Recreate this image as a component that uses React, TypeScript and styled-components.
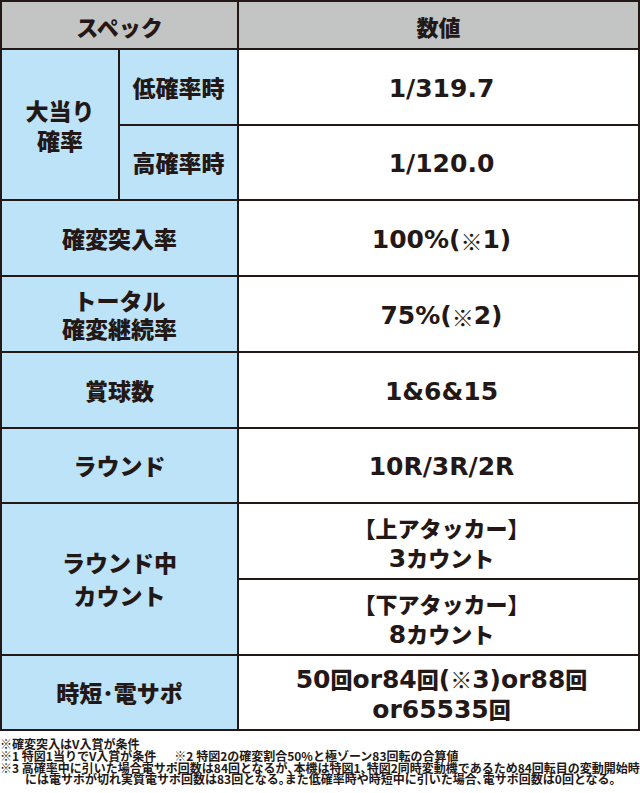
import React from "react"
import styled, { createGlobalStyle } from "styled-components"

const ink = "#231815"

const GlobalStyle = createGlobalStyle`
  html, body {
    margin: 0;
    padding: 0;
    background: #ffffff;
  }
  body {
    font-family: "Noto Sans CJK JP", sans-serif;
    color: ${ink};
  }
`

const Page = styled.div`
  width: 640px;
`

const Table = styled.div`
  display: grid;
  box-sizing: border-box;
  width: 640px;
  padding: 2px;
  gap: 2px;
  background: ${ink};
  grid-template-columns: 116px 117px 1fr;
  grid-template-rows: 46px 74px 73px 74px 74px 74px 73px 74px 74px 73px;
  grid-template-areas:
    "spec spec num"
    "hit low v1"
    "hit high v2"
    "entry entry v3"
    "cont cont v4"
    "prize prize v5"
    "round round v6"
    "count count v7"
    "count count v8"
    "time time v9";
`

const Cell = styled.div<{ $area: string }>`
  grid-area: ${(p) => p.$area};
  display: flex;
  align-items: center;
  justify-content: center;
  text-align: center;
`

const HeadCell = styled(Cell)`
  background: #c3c4c4;
  font-family: "Noto Sans CJK JP", sans-serif;
  font-weight: 900;
  font-size: 22px;
  line-height: 1;
  padding-top: 1px;
`

const LabelCell = styled(Cell)<{ $lh?: number }>`
  background: #bde3f8;
  font-family: "Noto Sans CJK JP", sans-serif;
  font-weight: 900;
  font-size: 23px;
  line-height: ${(p) => p.$lh ?? 29}px;
`

const ValueCell = styled(Cell)`
  background: #ffffff;
  box-sizing: border-box;
  padding: 3px 0 0 6px;
  font-family: "DejaVu Sans", "Noto Sans CJK JP", sans-serif;
  font-weight: 700;
  font-size: 25px;
  line-height: 28px;
`

const Ja = styled.span`
  font-family: "Noto Sans CJK JP", sans-serif;
  font-size: 22px;
  font-weight: 900;
`

const Brk = styled.span`
  font-feature-settings: "halt";
`

const Notes = styled.div`
  margin-top: 7px;
  font-family: "Noto Sans CJK JP", sans-serif;
  font-weight: 700;
  font-size: 12px;
  line-height: 11.8px;
  white-space: nowrap;
  color: ${ink};
`

const NoteLine = styled.div<{ $indent?: boolean }>`
  padding-left: ${(p) => (p.$indent ? "25px" : "0")};
`

const Gap = styled.span`
  display: inline-block;
  width: 18px;
`

export default function App() {
  return (
    <Page>
      <GlobalStyle />
      <Table>
        <HeadCell $area="spec">スペック</HeadCell>
        <HeadCell $area="num">数値</HeadCell>

        <LabelCell $area="hit" $lh={30}>
          大当り
          <br />
          確率
        </LabelCell>
        <LabelCell $area="low">低確率時</LabelCell>
        <ValueCell $area="v1">1/319.7</ValueCell>
        <LabelCell $area="high">高確率時</LabelCell>
        <ValueCell $area="v2">1/120.0</ValueCell>

        <LabelCell $area="entry">確変突入率</LabelCell>
        <ValueCell $area="v3">
          100%(<Ja>※</Ja>1)
        </ValueCell>

        <LabelCell $area="cont" $lh={28}>
          トータル
          <br />
          確変継続率
        </LabelCell>
        <ValueCell $area="v4">
          75%(<Ja>※</Ja>2)
        </ValueCell>

        <LabelCell $area="prize">賞球数</LabelCell>
        <ValueCell $area="v5">1&amp;6&amp;15</ValueCell>

        <LabelCell $area="round">ラウンド</LabelCell>
        <ValueCell $area="v6">10R/3R/2R</ValueCell>

        <LabelCell $area="count" $lh={33}>
          ラウンド中
          <br />
          カウント
        </LabelCell>
        <ValueCell $area="v7">
          <div>
            <Ja>
              <Brk>【</Brk>上アタッカー<Brk>】</Brk>
            </Ja>
            <br />3<Ja>カウント</Ja>
          </div>
        </ValueCell>
        <ValueCell $area="v8">
          <div>
            <Ja>
              <Brk>【</Brk>下アタッカー<Brk>】</Brk>
            </Ja>
            <br />8<Ja>カウント</Ja>
          </div>
        </ValueCell>

        <LabelCell $area="time">時短･電サポ</LabelCell>
        <ValueCell $area="v9">
          <div>
            50<Ja>回</Ja>or84<Ja>回</Ja>(<Ja>※</Ja>3)or88<Ja>回</Ja>
            <br />
            or65535<Ja>回</Ja>
          </div>
        </ValueCell>
      </Table>

      <Notes>
        <NoteLine>※確変突入はV入賞が条件</NoteLine>
        <NoteLine>
          ※1 特図1当りでV入賞が条件<Gap />※2 特図2の確変割合50%と極ゾーン83回転の合算値
        </NoteLine>
        <NoteLine>
          ※3 高確率中に引いた場合電サポ回数は84回となるが､本機は特図1､特図2同時変動機であるため84回転目の変動開始時
        </NoteLine>
        <NoteLine $indent>
          には電サポが切れ実質電サポ回数は83回となる｡また低確率時や時短中に引いた場合､電サポ回数は0回となる｡
        </NoteLine>
      </Notes>
    </Page>
  )
}
